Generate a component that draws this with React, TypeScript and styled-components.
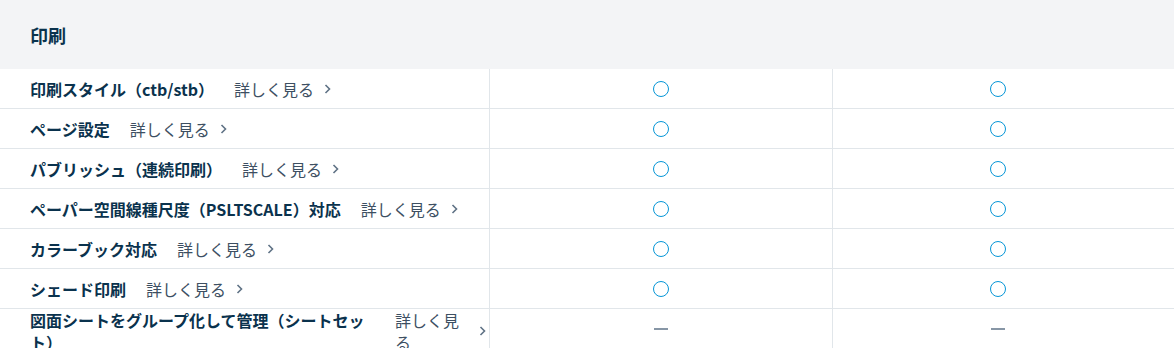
import React from "react";
import styled, { createGlobalStyle } from "styled-components";

type Mark = 'yes' | 'no'

type Feature = {
    label: string
    marks: [Mark, Mark]
}

const features: Feature[] = [
    { label: '印刷スタイル（ctb/stb）', marks: ['yes', 'yes'] },
    { label: 'ページ設定', marks: ['yes', 'yes'] },
    { label: 'パブリッシュ（連続印刷）', marks: ['yes', 'yes'] },
    { label: 'ペーパー空間線種尺度（PSLTSCALE）対応', marks: ['yes', 'yes'] },
    { label: 'カラーブック対応', marks: ['yes', 'yes'] },
    { label: 'シェード印刷', marks: ['yes', 'yes'] },
    { label: '図面シートをグループ化して管理（シートセット）', marks: ['no', 'no'] },
]

const GlobalStyle = createGlobalStyle`
    html, body {
        margin: 0;
        padding: 0;
        background: #ffffff;
    }
    body {
        font-family: "Noto Sans CJK JP", "Noto Sans", sans-serif;
        color: #0a324d;
    }
    * {
        box-sizing: border-box;
    }
`

const Section = styled.section`
    width: 1174px;
`
const Header = styled.div`
    height: 69px;
    background-color: #f3f4f6;
    display: flex;
    align-items: center;
    padding-left: 30px;
`
const Title = styled.h2`
    margin: 0;
    font-size: 18px;
    font-weight: 700;
    line-height: 1;
    color: #0a324d;
`
const Row = styled.div`
    display: grid;
    grid-template-columns: 490px 343px 1fr;
    min-height: 40px;
    border-bottom: 1px solid #e1e6ea;
`
const NameCell = styled.div`
    display: flex;
    align-items: center;
    gap: 20px;
    padding-left: 30px;
    border-right: 1px solid #e1e6ea;
`
const Label = styled.span`
    font-size: 16px;
    font-weight: 700;
    line-height: 22px;
    color: #0a324d;
`
const More = styled.a`
    display: flex;
    align-items: center;
    font-size: 16px;
    line-height: 22px;
    color: #3d4f62;
    text-decoration: none;
    cursor: pointer;
`
const MoreText = styled.span`
    min-width: 0;
`
const Chevron = styled.svg`
    flex: none;
    margin-left: 8px;
    width: 12px;
    height: 12px;
`
const MarkCell = styled.div<{ last?: boolean }>`
    display: flex;
    align-items: center;
    justify-content: center;
    padding-right: ${props => props.last ? '11px' : '0'};
    border-right: ${props => props.last ? 'none' : '1px solid #e1e6ea'};
`
const Circle = styled.span`
    width: 16px;
    height: 16px;
    border: 1.5px solid #0696d7;
    border-radius: 50%;
`
const Dash = styled.span`
    width: 14px;
    height: 2px;
    margin-bottom: 4px;
    background-color: #8796a6;
`

function MarkIcon({ mark }: { mark: Mark }) {
    return mark === 'yes' ? <Circle /> : <Dash />
}

export default function App() {
    return (
        <Section>
            <GlobalStyle />
            <Header>
                <Title>印刷</Title>
            </Header>
            {features.map(f => (
                <Row key={f.label}>
                    <NameCell>
                        <Label>{f.label}</Label>
                        <More>
                            <MoreText>詳しく見る</MoreText>
                            <Chevron viewBox="0 0 12 12" fill="none">
                                <path d="M3.5 2 L7.5 6 L3.5 10" stroke="#5f7285" strokeWidth="1.6" />
                            </Chevron>
                        </More>
                    </NameCell>
                    <MarkCell><MarkIcon mark={f.marks[0]} /></MarkCell>
                    <MarkCell last><MarkIcon mark={f.marks[1]} /></MarkCell>
                </Row>
            ))}
        </Section>
    )
}
